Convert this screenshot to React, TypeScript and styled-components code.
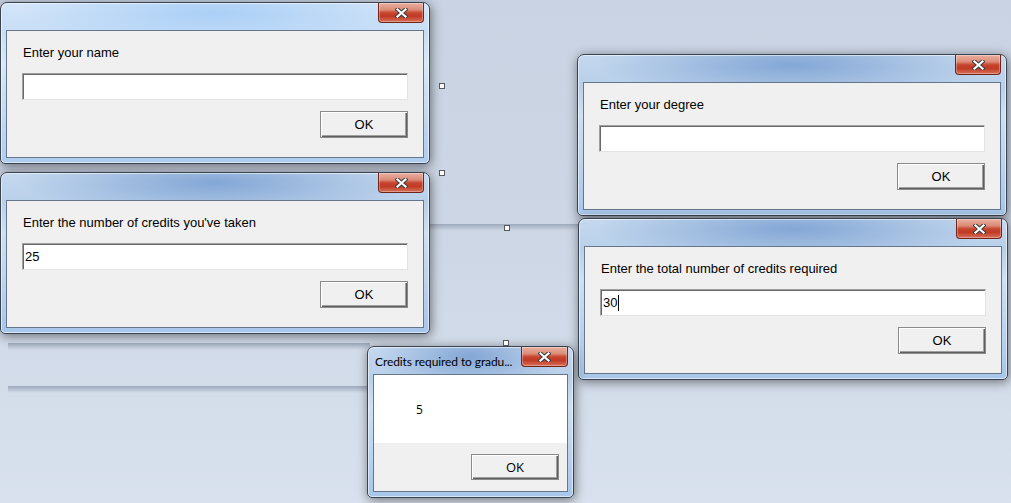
import React from 'react'
import styled, { createGlobalStyle } from 'styled-components'

const GlobalStyle = createGlobalStyle`
  html, body {
    margin: 0;
    padding: 0;
  }
  body {
    overflow: hidden;
    background: #d3dcea;
  }
`

// Desktop surface
const Desktop = styled.div`
  position: relative;
  width: 1011px;
  height: 503px;
  overflow: hidden;
  background: linear-gradient(to bottom, #c9d3e3 0%, #cdd6e5 45%, #d8e1ed 100%);
  font-family: 'Liberation Sans', Arial, sans-serif;
`

// edge of a panel behind the dialogs
const Band = styled.div<{ $x: number; $y: number; $w: number }>`
  position: absolute;
  left: ${p => p.$x}px;
  top: ${p => p.$y}px;
  width: ${p => p.$w}px;
  height: 7px;
  background: linear-gradient(to bottom, #9ea9bb 0%, #b4bfcf 45%, rgba(205, 214, 229, 0) 100%);
`

const Handle = styled.div<{ $x: number; $y: number }>`
  position: absolute;
  left: ${p => p.$x}px;
  top: ${p => p.$y}px;
  width: 4px;
  height: 4px;
  background: #ffffff;
  border: 1px solid #555a60;
  z-index: 5;
`

// Window chrome
const Frame = styled.div<{ $x: number; $y: number; $w: number; $h: number; $lit?: boolean }>`
  position: absolute;
  left: ${p => p.$x}px;
  top: ${p => p.$y}px;
  width: ${p => p.$w}px;
  height: ${p => p.$h}px;
  box-sizing: border-box;
  display: flex;
  flex-direction: column;
  border: 1px solid #3a4350;
  border-radius: 7px 7px 5px 5px;
  background: ${p =>
    p.$lit
      ? `radial-gradient(ellipse 45% 34px at 50% 10px, rgba(168, 206, 246, 0.95), rgba(168, 206, 246, 0) 100%),
         linear-gradient(to bottom, #d3e5f8 0px, #c7def6 30px, #d6e8f9 60px, #aecdef 100%)`
      : `radial-gradient(ellipse 46% 34px at 50% 10px, rgba(128, 164, 212, 0.95), rgba(128, 164, 212, 0) 100%),
         linear-gradient(to bottom, #c4d8ee 0px, #b9d0ea 30px, #cde0f4 60px, #a7c6ea 100%)`};
  box-shadow: inset 0 0 0 1px rgba(255, 255, 255, 0.55), 1px 2px 11px rgba(0, 0, 0, 0.5);
`

const TitleBar = styled.div`
  height: 27px;
  flex: none;
  display: flex;
  align-items: flex-start;
  padding: 0 5px 0 7px;
`

const TitleText = styled.div`
  flex: 1;
  margin-top: 7px;
  font-family: 'Lato', 'Open Sans', sans-serif;
  font-size: 12px;
  letter-spacing: -0.1px;
  line-height: 16px;
  color: #000;
  white-space: nowrap;
  overflow: hidden;
`

const CloseButton = styled.div<{ $w: number }>`
  width: ${p => p.$w}px;
  height: 20px;
  flex: none;
  box-sizing: border-box;
  display: flex;
  align-items: center;
  justify-content: center;
  border: 1px solid #6e2418;
  border-top: none;
  border-radius: 0 0 4px 4px;
  background: linear-gradient(to bottom, #eab0a2 0%, #dc8c79 35%, #c7452e 52%, #bf3a25 70%, #d9715a 100%);
  box-shadow: inset 0 0 0 1px rgba(255, 255, 255, 0.3);
`

const Client = styled.div<{ $white?: boolean }>`
  flex: 1;
  margin: 0 5px 5px 5px;
  border: 1px solid #66758a;
  background: #f0f0f0;
  display: flex;
  flex-direction: column;
  padding: ${p => (p.$white ? '0' : '14px 15px 0 15px')};
`

// Input box parts
const Prompt = styled.div`
  font-size: 13px;
  line-height: 16px;
  color: #000;
  padding-left: 1px;
`

const Field = styled.div`
  margin-top: 12px;
  height: 27px;
  box-sizing: border-box;
  display: flex;
  align-items: center;
  padding-left: 2px;
  background: #fff;
  border-top: 1px solid #a0a0a0;
  border-left: 1px solid #a0a0a0;
  border-right: 1px solid #e3e3e3;
  border-bottom: 1px solid #e3e3e3;
  box-shadow: inset 1px 1px 0 #696969;
  font-size: 13px;
  color: #000;
`

const Caret = styled.span`
  display: inline-block;
  width: 1px;
  height: 16px;
  background: #000;
  margin-left: 1px;
`

const ButtonRow = styled.div<{ $top: number }>`
  display: flex;
  justify-content: flex-end;
  margin-top: ${p => p.$top}px;
`

const OkButton = styled.div<{ $h: number; $font?: string }>`
  width: 88px;
  height: ${p => p.$h}px;
  box-sizing: border-box;
  display: flex;
  align-items: center;
  justify-content: center;
  background: #f0f0f0;
  border: 1px solid #8a8a8a;
  box-shadow: inset 1px 1px 0 #ffffff, inset -1px -1px 0 #5f5f5f, inset -2px -2px 0 #a0a0a0;
  font-family: ${p => p.$font || "'Liberation Sans', Arial, sans-serif"};
  font-size: 13px;
  color: #000;
`

// Message box parts
const MsgBody = styled.div`
  height: 68px;
  flex: none;
  background: #fff;
  padding-left: 42px;
  box-sizing: border-box;
  display: flex;
  align-items: center;
  font-family: 'Open Sans', 'Noto Sans', sans-serif;
  font-size: 12px;
  color: #000;
`

const MsgFooter = styled.div`
  flex: 1;
  display: flex;
  justify-content: flex-end;
  align-items: flex-start;
  padding: 11px 8px 0 0;
`

const CloseGlyph = () => (
  <svg width="13" height="10" viewBox="0 0 13 10">
    <path d="M2.5 1.5 L10.5 8.5 M10.5 1.5 L2.5 8.5" stroke="#3b3b3b" strokeWidth="4.2" strokeLinecap="square" />
    <path d="M2.5 1.5 L10.5 8.5 M10.5 1.5 L2.5 8.5" stroke="#ffffff" strokeWidth="2.2" strokeLinecap="square" />
  </svg>
)

interface InputBoxProps {
  x: number
  y: number
  prompt: string
  value?: string
  caret?: boolean
  lit?: boolean
}

const InputBox: React.FC<InputBoxProps> = ({ x, y, prompt, value, caret, lit }) => (
  <Frame $x={x} $y={y} $w={430} $h={162} $lit={lit}>
    <TitleBar>
      <TitleText />
      <CloseButton $w={46}>
        <CloseGlyph />
      </CloseButton>
    </TitleBar>
    <Client>
      <Prompt>{prompt}</Prompt>
      <Field>
        {value}
        {caret && <Caret />}
      </Field>
      <ButtonRow $top={11}>
        <OkButton $h={27}>OK</OkButton>
      </ButtonRow>
    </Client>
  </Frame>
)

export default function App() {
  return (
    <Desktop>
      <GlobalStyle />
      <Band $x={8} $y={343} $w={362} />
      <Band $x={8} $y={386} $w={362} />
      <Band $x={430} $y={224} $w={150} />

      <InputBox x={0} y={2} prompt="Enter your name" lit />
      <InputBox x={0} y={172} prompt="Enter the number of credits you've taken" value="25" />
      <InputBox x={577} y={54} prompt="Enter your degree" />
      <InputBox x={578} y={218} prompt="Enter the total number of credits required" value="30" caret />

      <Handle $x={439} $y={83} />
      <Handle $x={439} $y={170} />
      <Handle $x={504} $y={225} />
      <Handle $x={503} $y={340} />

      <Frame $x={367} $y={346} $w={207} $h={152}>
        <TitleBar>
          <TitleText>Credits required to gradu...</TitleText>
          <CloseButton $w={47}>
            <CloseGlyph />
          </CloseButton>
        </TitleBar>
        <Client $white>
          <MsgBody>5</MsgBody>
          <MsgFooter>
            <OkButton $h={26} $font="'Open Sans', 'Noto Sans', sans-serif">OK</OkButton>
          </MsgFooter>
        </Client>
      </Frame>
    </Desktop>
  )
}
